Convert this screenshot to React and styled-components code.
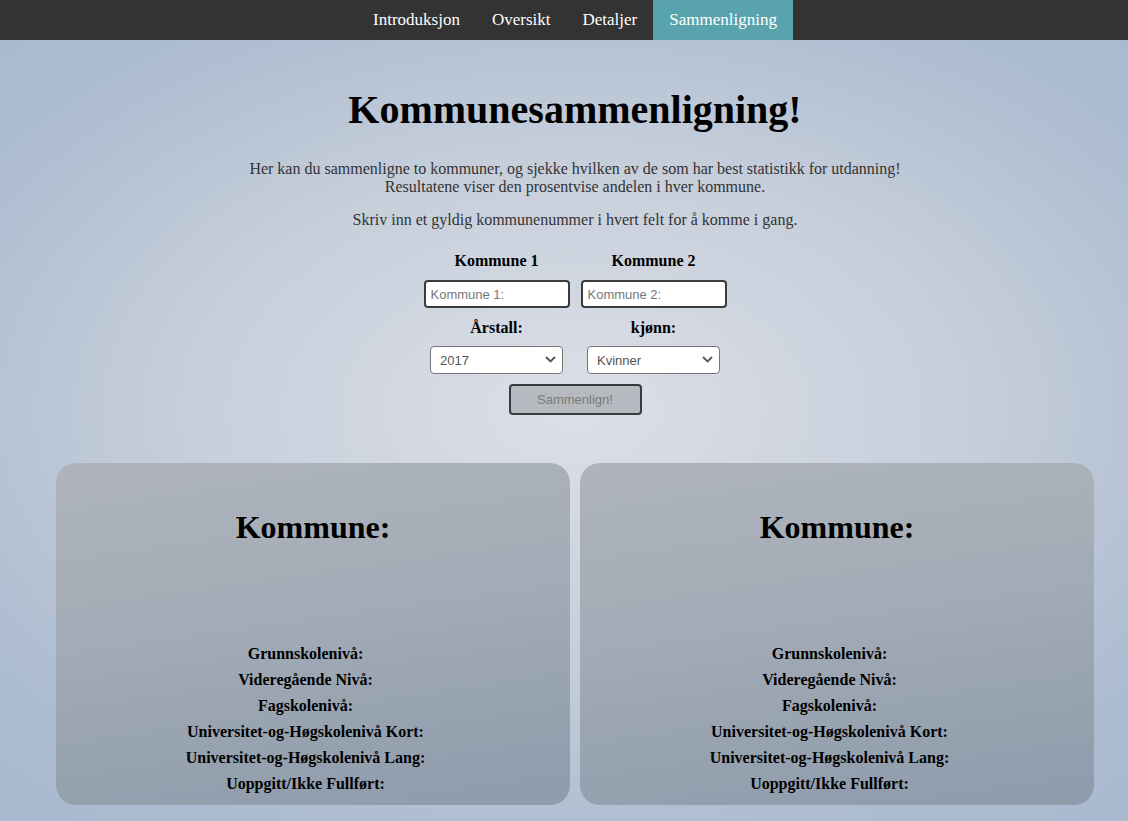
import React from "react";
import styled, { createGlobalStyle } from "styled-components";

const Global = createGlobalStyle`
  html, body { margin: 0; padding: 0; }
  body {
    font-family: "Liberation Serif", "Times New Roman", serif;
    background: radial-gradient(ellipse 75% 65% at 575px 410px, #dcdfe7 0%, #c7cfdb 45%, #aebdd1 80%, #a8b9cf 100%);
    min-height: 821px;
    overflow: hidden;
  }
`;

const Page = styled.div`
  min-height: 821px;
  display: flex;
  flex-direction: column;
`;

const Nav = styled.nav`
  background: #333333;
  height: 40px;
  display: flex;
  justify-content: center;
  padding-left: 22px;
`;

const NavItem = styled.a`
  display: flex;
  align-items: center;
  padding: 0 16px;
  color: #ffffff;
  font-size: 17px;
  text-decoration: none;
  background: ${(p) => (p.$active ? "#58a3ae" : "transparent")};
`;

const Main = styled.main`
  padding-left: 22px;
  display: flex;
  flex-direction: column;
  align-items: center;
`;

const Title = styled.h1`
  font-size: 40px;
  font-weight: bold;
  margin: 46px 0 27px;
  color: #000;
`;

const Text = styled.p`
  margin: 0 0 15px;
  font-size: 16px;
  line-height: 18px;
  color: #333;
  text-align: center;
`;

const Form = styled.div`
  margin-top: 8px;
  display: grid;
  grid-template-columns: 146px 146px;
  column-gap: 11px;
  justify-items: center;
`;

const Label = styled.div`
  font-weight: bold;
  font-size: 16px;
  line-height: 18px;
  color: #000;
  margin-bottom: ${(p) => p.$mb ?? 10}px;
`;

const Input = styled.input`
  box-sizing: border-box;
  width: 146px;
  height: 28px;
  border: 2px solid #3b3b3b;
  border-radius: 4px;
  background: #fff;
  font-family: Arial, "Liberation Sans", sans-serif;
  font-size: 13px;
  padding: 0 5px;
  margin-bottom: 11px;
  &::placeholder { color: #777; }
`;

const SelectWrap = styled.div`
  position: relative;
  width: 133px;
  height: 28px;
  margin-bottom: 10px;
`;

const Select = styled.select`
  appearance: none;
  box-sizing: border-box;
  width: 100%;
  height: 100%;
  border: 1px solid #767676;
  border-radius: 4px;
  background: #fff;
  color: #555;
  font-family: Arial, "Liberation Sans", sans-serif;
  font-size: 13px;
  padding: 0 9px;
`;

const Chevron = styled.svg`
  position: absolute;
  right: 7px;
  top: 10px;
  pointer-events: none;
`;

const Button = styled.button`
  grid-column: 1 / span 2;
  box-sizing: border-box;
  width: 133px;
  height: 31px;
  border: 2px solid #3b3b3b;
  border-radius: 4px;
  background: #b6b9c0;
  color: #7a7a7a;
  font-family: Arial, "Liberation Sans", sans-serif;
  font-size: 13px;
`;

const Cards = styled.div`
  align-self: stretch;
  display: flex;
  gap: 10px;
  padding: 0 34px;
  margin-top: 48px;
`;

const Card = styled.section`
  flex: 1;
  height: 342px;
  box-sizing: border-box;
  border-radius: 20px;
  background: linear-gradient(172deg, #afb4bc 0%, #a2abb6 45%, #8e9bab 100%);
  display: flex;
  flex-direction: column;
  align-items: center;
  padding-top: 46px;
`;

const CardTitle = styled.h2`
  margin: 0;
  font-size: 32px;
  line-height: 37px;
  font-weight: bold;
  color: #000;
`;

const Stats = styled.div`
  margin-top: 99px;
  padding-right: 15px;
  display: flex;
  flex-direction: column;
  align-items: center;
  gap: 8px;
`;

const Stat = styled.div`
  font-size: 16px;
  line-height: 18px;
  font-weight: bold;
  color: #000;
`;

const stats = [
  "Grunnskolenivå:",
  "Videregående Nivå:",
  "Fagskolenivå:",
  "Universitet-og-Høgskolenivå Kort:",
  "Universitet-og-Høgskolenivå Lang:",
  "Uoppgitt/Ikke Fullført:",
];

const Arrow = () => (
  <Chevron width="11" height="7" viewBox="0 0 11 7">
    <path d="M1 1 L5.5 5.5 L10 1" fill="none" stroke="#555" strokeWidth="1.8" />
  </Chevron>
);

function ResultCard() {
  return (
    <Card>
      <CardTitle>Kommune:</CardTitle>
      <Stats>
        {stats.map((s) => (
          <Stat key={s}>{s}</Stat>
        ))}
      </Stats>
    </Card>
  );
}

export default function App() {
  return (
    <Page>
      <Global />
      <Nav>
        <NavItem>Introduksjon</NavItem>
        <NavItem>Oversikt</NavItem>
        <NavItem>Detaljer</NavItem>
        <NavItem $active>Sammenligning</NavItem>
      </Nav>
      <Main>
        <Title>Kommunesammenligning!</Title>
        <Text>
          Her kan du sammenligne to kommuner, og sjekke hvilken av de som har best statistikk for utdanning!
          <br />
          Resultatene viser den prosentvise andelen i hver kommune.
        </Text>
        <Text>Skriv inn et gyldig kommunenummer i hvert felt for å komme i gang.</Text>
        <Form>
          <Label>Kommune 1</Label>
          <Label>Kommune 2</Label>
          <Input placeholder="Kommune 1:" />
          <Input placeholder="Kommune 2:" />
          <Label $mb={9}>Årstall:</Label>
          <Label $mb={9}>kjønn:</Label>
          <SelectWrap>
            <Select defaultValue="2017">
              <option>2017</option>
            </Select>
            <Arrow />
          </SelectWrap>
          <SelectWrap>
            <Select defaultValue="Kvinner">
              <option>Kvinner</option>
            </Select>
            <Arrow />
          </SelectWrap>
          <Button>Sammenlign!</Button>
        </Form>
        <Cards>
          <ResultCard />
          <ResultCard />
        </Cards>
      </Main>
    </Page>
  );
}
